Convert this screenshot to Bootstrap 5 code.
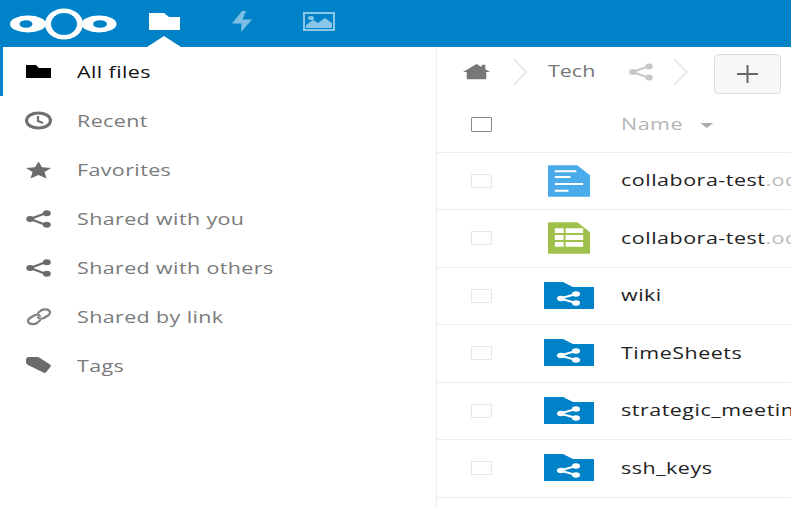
<!DOCTYPE html>
<html lang="en">
<head>
    <meta charset="UTF-8">
    <meta name="viewport" content="width=device-width, initial-scale=1.0">
    <title>Files</title>
    <link href="https://cdn.jsdelivr.net/npm/bootstrap@5.3.0/dist/css/bootstrap.min.css" rel="stylesheet">
    <style>
        html, body { height: 100%; overflow: hidden; }
        body { font-family: "Open Sans", sans-serif; font-size: 16.5px; color: #222; background: #fff; }
        .wide-text { display: inline-block; white-space: nowrap; transform: scaleX(1.3); transform-origin: left center; }
        .top-bar { height: 47px; background: #0082c9; padding-left: 10px; }
        .top-logo { width: 107px; height: 32px; flex: none; }
        .app-icon { position: relative; height: 47px; display: flex; align-items: center; justify-content: center; }
        .app-files { width: 34px; margin-left: 30px; padding-bottom: 4px; }
        .app-activity { width: 24px; margin-left: 49px; padding-bottom: 4px; }
        .app-gallery { width: 32px; margin-left: 49px; padding-bottom: 4px; }
        .app-tip { position: absolute; left: 0; bottom: 0; width: 34px; height: 12px; }
        .page-body { height: 460px; }
        .side-nav { width: 437px; flex: none; border-right: 1px solid #ededed; }
        .side-item { height: 49px; padding-left: 25px; padding-top: 1px; color: #7a7a7a; letter-spacing: .3px; }
        .side-item.is-active { color: #111; border-left: 3px solid #0082c9; padding-left: 22px; }
        .side-icon { width: 27px; height: 22px; margin-right: 25px; flex: none; }
        .file-pane { flex: 1; min-width: 0; overflow: hidden; }
        .crumbs { height: 53px; padding-left: 26px; padding-bottom: 4px; color: #777; }
        .crumb-home { width: 27px; height: 16px; flex: none; }
        .crumb-sep { width: 14px; height: 28px; margin: 0 21px 0 23px; flex: none; }
        .crumb-share { width: 26px; height: 20px; margin-left: 44px; flex: none; }
        .crumb-sep2 { width: 15px; height: 28px; margin-left: 19px; margin-right: 26px; flex: none; }
        .add-btn { width: 67px; height: 40px; margin-top: 4px; background: #f7f7f7; border: 1px solid #dcdcdc; border-radius: 4px; }
        .list-head { height: 52.6px; padding-bottom: 3px; border-bottom: 1px solid #ededed; color: #b5b5b5; }
        .file-row { height: 57.5px; border-bottom: 1px solid #ededed; }
        .check-col { width: 88px; flex: none; padding-left: 34px; }
        .thumb-col { width: 96px; flex: none; display: flex; justify-content: center; padding-left: 13px; padding-right: 21px; }
        .tick { display: block; width: 21px; height: 14px; border: 1.5px solid #e6e6e6; background: #fff; border-radius: 1px; }
        .tick-all { height: 15px; border-color: #8a8a8a; }
        .file-name { letter-spacing: .4px; }
        .file-ext { color: #bbb; }
        .sort-mark { display: inline-block; border: 5px solid transparent; border-top: 5px solid #aaa; border-bottom: 0; margin-left: 13px; vertical-align: 2px; }
    </style>
</head>
<body>
    <svg width="0" height="0" class="position-absolute">
        <symbol id="shareGlyph" viewBox="0 0 26 20">
            <path d="M21 4 5 10l16 6" fill="none" stroke="currentColor" stroke-width="2.200"/>
            <ellipse cx="21" cy="4.500" rx="3.800" ry="2.900" fill="currentColor"/>
            <ellipse cx="5" cy="10" rx="3.800" ry="2.900" fill="currentColor"/>
            <ellipse cx="21" cy="15.500" rx="3.800" ry="2.900" fill="currentColor"/>
        </symbol>
        <symbol id="sharedFolder" viewBox="0 0 50 28">
            <path d="M0 27V0h19l10 5h21v22z" fill="#0082c9"/>
            <path d="M32 12 16 16.500 32 21" fill="none" stroke="#fff" stroke-width="2"/>
            <ellipse cx="32" cy="12" rx="4" ry="2.700" fill="#fff"/>
            <ellipse cx="17" cy="16.500" rx="4" ry="2.700" fill="#fff"/>
            <ellipse cx="32" cy="21" rx="4" ry="2.700" fill="#fff"/>
        </symbol>
    </svg>

    <header class="top-bar d-flex align-items-center">
        <svg class="top-logo" viewBox="0 0 107 32">
            <ellipse cx="18" cy="16" rx="18" ry="8.500" fill="#fff"/>
            <ellipse cx="89" cy="16" rx="17.500" ry="8.500" fill="#fff"/>
            <ellipse cx="54" cy="16" rx="19" ry="15.500" fill="#fff"/>
            <ellipse cx="16" cy="16" rx="6.500" ry="3.800" fill="#0082c9"/>
            <ellipse cx="90" cy="16" rx="7" ry="3.800" fill="#0082c9"/>
            <ellipse cx="54" cy="16" rx="13" ry="11" fill="#0082c9"/>
        </svg>
        <div class="app-icon app-files">
            <svg width="32" height="17" viewBox="0 0 32 17"><path d="M1 17V0h15l5 4h11v13z" fill="#fff"/></svg>
            <svg class="app-tip" viewBox="0 0 34 12"><path d="M0 12 17 1l17 11z" fill="#fff"/></svg>
        </div>
        <div class="app-icon app-activity">
            <svg width="22" height="21" viewBox="0 0 22 21"><path d="M11 0 1 12.500h9.500L10 21 21 8.500h-9.500L15 0z" fill="#7dbfe4"/></svg>
        </div>
        <div class="app-icon app-gallery">
            <svg width="32" height="19" viewBox="0 0 32 19">
                <path d="M0 0h32v19H0zM2 2v15h28V2z" fill="#8ac6e8"/>
                <path d="M3 16v-3l7-5 5 3 7-5 7 5v5z" fill="#8ac6e8"/>
                <ellipse cx="8" cy="6" rx="3" ry="2" fill="#8ac6e8"/>
            </svg>
        </div>
    </header>

    <div class="page-body d-flex">
        <nav class="side-nav">
            <div class="side-item is-active d-flex align-items-center">
                <svg class="side-icon" viewBox="0 0 27 22"><path d="M1 17V4h10l3 3h12v10z" fill="#000"/></svg>
                <span class="wide-text">All files</span>
            </div>
            <div class="side-item d-flex align-items-center">
                <svg class="side-icon" viewBox="0 0 27 22">
                    <ellipse cx="13.500" cy="10.500" rx="12" ry="7.500" fill="none" stroke="#707070" stroke-width="3.200"/>
                    <path d="M13 6v5l5 2" fill="none" stroke="#707070" stroke-width="2.200"/>
                </svg>
                <span class="wide-text">Recent</span>
            </div>
            <div class="side-item d-flex align-items-center">
                <svg class="side-icon" viewBox="0 0 27 22"><path d="M13.500 2.500 17 8.300l9 .7-6.500 4 2 6.500-8-3.500-8 3.500 2-6.500L1 9l9-.7z" fill="#6b6b6b"/></svg>
                <span class="wide-text">Favorites</span>
            </div>
            <div class="side-item d-flex align-items-center">
                <svg class="side-icon" style="color:#6b6b6b"><use href="#shareGlyph"/></svg>
                <span class="wide-text">Shared with you</span>
            </div>
            <div class="side-item d-flex align-items-center">
                <svg class="side-icon" style="color:#6b6b6b"><use href="#shareGlyph"/></svg>
                <span class="wide-text">Shared with others</span>
            </div>
            <div class="side-item d-flex align-items-center">
                <svg class="side-icon" viewBox="0 0 27 22">
                    <g fill="none" stroke="#808080" stroke-width="2.200" stroke-linecap="round">
                        <path d="M13 7l3-2.500c2-1.500 6-1.500 8 0s1 3.500-1 5l-4 2.500c-2 1-5 1-6-.5"/>
                        <path d="M15 14.500l-3 2.500c-2 1.500-6 1.500-8 0s-1-3.500 1-5l4-2.500c2-1 5-1 6 .5"/>
                    </g>
                </svg>
                <span class="wide-text">Shared by link</span>
            </div>
            <div class="side-item d-flex align-items-center">
                <svg class="side-icon" viewBox="0 0 27 22"><path d="M1 5c0-2 1-3 3-3h8c1 0 2 .3 3 1l10 6.500c1 .7 1 1.500.3 2.500l-4 5c-.7 1-1.800 1.200-3 .5L3 10c-1.500-1-2-2-2-3z" fill="#6b6b6b"/></svg>
                <span class="wide-text">Tags</span>
            </div>
        </nav>

        <main class="file-pane">
            <div class="crumbs d-flex align-items-center">
                <svg class="crumb-home" viewBox="0 0 29 20" preserveAspectRatio="none"><path d="M0 10 14.500 0 20 3.800V1h4v5.600L29 10h-4v9H4v-9z" fill="#777"/></svg>
                <svg class="crumb-sep" viewBox="0 0 16 30" preserveAspectRatio="none"><path d="m1 1 14 14L1 29" fill="none" stroke="#ddd" stroke-width="1.300"/></svg>
                <span class="wide-text">Tech</span>
                <svg class="crumb-share" style="color:#c8c8c8"><use href="#shareGlyph"/></svg>
                <svg class="crumb-sep2" viewBox="0 0 16 30" preserveAspectRatio="none"><path d="m1 1 14 14L1 29" fill="none" stroke="#ddd" stroke-width="1.300"/></svg>
                <div class="add-btn d-flex align-items-center justify-content-center flex-shrink-0">
                    <svg width="21" height="18" viewBox="0 0 21 18"><path d="M9.500 0h2v8H21v2h-9.500v8h-2v-8H0V8h9.500z" fill="#666"/></svg>
                </div>
            </div>

            <div class="list-head d-flex align-items-center">
                <div class="check-col"><span class="tick tick-all"></span></div>
                <div class="thumb-col"></div>
                <div class="file-name wide-text">Name<span class="sort-mark"></span></div>
            </div>

            <div class="file-row d-flex align-items-center">
                <div class="check-col"><span class="tick"></span></div>
                <div class="thumb-col">
                    <svg width="42" height="32" viewBox="0 0 43 32"><path d="M0 0h30l13 10v22H0z" fill="#49abea"/><path d="M7 5h22v2H7zM7 11h16v2H7zM7 18h29v2H7zM7 25h14v2H7z" fill="#fff"/></svg>
                </div>
                <div class="file-name wide-text">collabora-test<span class="file-ext">.odt</span></div>
            </div>
            <div class="file-row d-flex align-items-center">
                <div class="check-col"><span class="tick"></span></div>
                <div class="thumb-col">
                    <svg width="42" height="32" viewBox="0 0 43 32"><path d="M0 0h30l13 10v22H0z" fill="#9fc14c"/><path d="M7 6h9v5H7zM18 6h18v5H18zM7 13h9v5H7zM18 13h18v5H18zM7 20h9v5H7zM18 20h18v5H18z" fill="#fff"/></svg>
                </div>
                <div class="file-name wide-text">collabora-test<span class="file-ext">.ods</span></div>
            </div>
            <div class="file-row d-flex align-items-center">
                <div class="check-col"><span class="tick"></span></div>
                <div class="thumb-col"><svg width="50" height="28"><use href="#sharedFolder"/></svg></div>
                <div class="file-name wide-text">wiki</div>
            </div>
            <div class="file-row d-flex align-items-center">
                <div class="check-col"><span class="tick"></span></div>
                <div class="thumb-col"><svg width="50" height="28"><use href="#sharedFolder"/></svg></div>
                <div class="file-name wide-text">TimeSheets</div>
            </div>
            <div class="file-row d-flex align-items-center">
                <div class="check-col"><span class="tick"></span></div>
                <div class="thumb-col"><svg width="50" height="28"><use href="#sharedFolder"/></svg></div>
                <div class="file-name wide-text">strategic_meetings</div>
            </div>
            <div class="file-row d-flex align-items-center">
                <div class="check-col"><span class="tick"></span></div>
                <div class="thumb-col"><svg width="50" height="28"><use href="#sharedFolder"/></svg></div>
                <div class="file-name wide-text">ssh_keys</div>
            </div>
        </main>
    </div>
</body>
</html>
